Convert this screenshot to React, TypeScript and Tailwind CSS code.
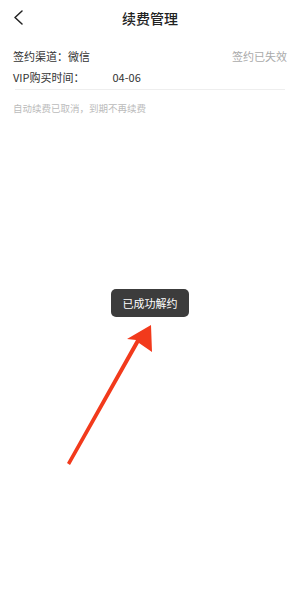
import React from "react";

export default function App() {
  const font = { fontFamily: '"Noto Sans CJK SC", "Noto Sans", sans-serif' };
  return (
    <div className="relative w-[300px] h-[612px] bg-white overflow-hidden" style={font}>
      {/* header */}
      <div className="relative flex items-center justify-center h-[35px]">
        <svg className="absolute left-[13px] top-[10px]" width="11" height="15" viewBox="0 0 11 15">
          <path d="M9 1 L2 7.5 L9 14" fill="none" stroke="#222" strokeWidth="1.5" strokeLinecap="round" strokeLinejoin="round" />
        </svg>
        <span className="text-[14px] font-medium text-[#222] leading-none">续费管理</span>
      </div>
      {/* info */}
      <div className="flex flex-col px-[13px] pt-[14px]">
        <div className="flex items-center justify-between h-[14px]">
          <span className="text-[11px] text-[#333] leading-none">签约渠道：微信</span>
          <span className="text-[11px] text-[#aaa] leading-none">签约已失效</span>
        </div>
        <div className="flex items-center h-[14px] mt-[7px]">
          <span className="text-[11px] text-[#333] leading-none">VIP购买时间：</span>
          <span className="w-[28px]" />
          <span className="text-[11px] text-[#333] leading-none">04-06</span>
        </div>
      </div>
      <div className="mx-[15px] mt-[5px] h-px bg-[#eeeeee]" />
      <div className="px-[13px] pt-[14px] leading-none">
        <span className="block text-[9.5px] text-[#bbb] leading-none">自动续费已取消，到期不再续费</span>
      </div>
      {/* toast */}
      <div className="absolute left-[111px] top-[289px] w-[78px] h-[28px] rounded-[5px] bg-[#3c3c3c] flex items-center justify-center">
        <span className="text-[11px] text-white leading-none">已成功解约</span>
      </div>
      {/* arrow */}
      <svg className="absolute left-0 top-0" width="300" height="612" viewBox="0 0 300 612">
        <polygon points="67,463 70,465 139,343 152,352 151,325 127,339 136,340" fill="#f23a1c" />
      </svg>
    </div>
  );
}
